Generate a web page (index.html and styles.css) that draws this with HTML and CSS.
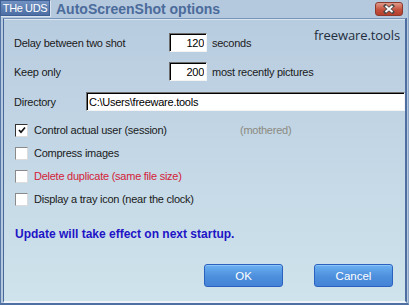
FILE: index.html
```html
<!DOCTYPE html>
<html lang="en">
<head>
    <meta charset="utf-8"/>
    <title>AutoScreenShot options</title>
    <link rel="stylesheet" href="styles.css">
</head>
<body>
    <div class="window">
        <div class="titlebar">
            <span class="badge">THe UDS</span>
            <span class="title">AutoScreenShot options</span>
            <span class="close">
                <svg width="14" height="10" viewBox="0 0 14 10">
                    <path d="M3.5 2 L10.5 8 M10.5 2 L3.5 8" stroke="#4a4a4a" stroke-width="3.6" stroke-linecap="square"/>
                    <path d="M3.5 2 L10.5 8 M10.5 2 L3.5 8" stroke="#ffffff" stroke-width="1.8"/>
                </svg>
            </span>
        </div>
        <div class="client">
            <div class="row">
                <label class="field-label" for="delay">Delay between two shot</label>
                <input class="num" id="delay" type="text" value="120">
                <span class="unit">seconds</span>
                <span class="brand">freeware.tools</span>
            </div>
            <div class="row second">
                <label class="field-label" for="keep">Keep only</label>
                <input class="num" id="keep" type="text" value="200">
                <span class="unit">most recently pictures</span>
            </div>
            <div class="row third">
                <label class="dir-label" for="dir">Directory</label>
                <input class="path" id="dir" type="text" value="C:\Users\freeware.tools">
            </div>

            <div class="checks">
                <div class="check">
                    <span class="box checked">
                        <svg width="8" height="8" viewBox="0 0 8 8"><path d="M1 4 L3 6.3 L7 1.5" fill="none" stroke="#111" stroke-width="1.7"/></svg>
                    </span>
                    <span class="check-label wide">Control actual user (session)</span>
                    <span class="hint">(mothered)</span>
                </div>
                <div class="check">
                    <span class="box"></span>
                    <span class="check-label">Compress images</span>
                </div>
                <div class="check">
                    <span class="box"></span>
                    <span class="check-label danger">Delete duplicate (same file size)</span>
                </div>
                <div class="check">
                    <span class="box"></span>
                    <span class="check-label">Display a tray icon (near the clock)</span>
                </div>
            </div>

            <div class="notice">Update will take effect on next startup.</div>

            <div class="actions">
                <button class="button">OK</button>
                <button class="button">Cancel</button>
            </div>
        </div>
    </div>
</body>
</html>
```
FILE: styles.css
```css
* {
    box-sizing: border-box;
}

body {
    margin: 0;
    font-family: "Liberation Sans", Arial, sans-serif;
    font-size: 11px;
    letter-spacing: -0.25px;
    color: #1a1a1a;
}

.window {
    width: 409px;
    height: 305px;
    display: flex;
    flex-direction: column;
    background: #b4c8de;
    border-left: 1px solid #5676a8;
    border-right: 1px solid #8fa8c8;
    border-bottom: 2px solid #4f70a3;
    padding: 0 1px 0 2px;
}

.titlebar {
    height: 18px;
    display: flex;
    align-items: flex-start;
    margin-left: -3px;
}

.badge {
    width: 50px;
    height: 16px;
    line-height: 14px;
    text-align: center;
    color: #fff;
    font-size: 11px;
    letter-spacing: -0.4px;
    background: linear-gradient(#7191c2, #4d6ea4);
    border: 1px solid #3e5f94;
    box-shadow: 1px 1px 0 #d9e4f0;
}

.title {
    margin-left: 6px;
    font-size: 14px;
    font-weight: bold;
    line-height: 18px;
    letter-spacing: 0;
    color: #4b6b9b;
}

.close {
    margin-left: auto;
    margin-right: 4px;
    margin-top: 2px;
    width: 28px;
    height: 14px;
    display: flex;
    align-items: center;
    justify-content: center;
    border: 1px solid #8c3a2e;
    border-radius: 3px;
    background: linear-gradient(#e09a88, #c4523e 55%, #b5402c);
}

.client {
    flex: 1;
    display: flex;
    flex-direction: column;
    padding: 14px 0 0 10px;
    border-top: 1px solid #7994bb;
    border-left: 1px solid #49689b;
    border-right: 2px solid #4e6ea2;
    border-bottom: 2px solid #eef4f9;
    box-shadow: inset 0 1px 0 #d8e4f0;
    background: linear-gradient(#b8cce0, #cfe3ec);
}

.row {
    height: 19px;
    display: flex;
    align-items: center;
}

.second {
    margin-top: 10px;
}

.third {
    margin-top: 11px;
}

.field-label {
    width: 155px;
}

.dir-label {
    width: 72px;
}

.num,
.path {
    height: 19px;
    font-family: inherit;
    font-size: 11px;
    letter-spacing: -0.25px;
    color: #000;
    background: #fff;
    border-top: 1px solid #6d6d6d;
    border-left: 1px solid #6d6d6d;
    border-right: 1px solid #f4f4f4;
    border-bottom: 1px solid #f4f4f4;
    box-shadow: inset 1px 1px 0 #000;
    outline: none;
}

.num {
    width: 38px;
    text-align: right;
    padding: 1px 2px 0 0;
}

.path {
    flex: 1;
    padding: 1px 0 0 2px;
}

.unit {
    margin-left: 5px;
}

.brand {
    align-self: flex-start;
    margin-left: auto;
    margin-right: 5px;
    margin-top: -5px;
    font-family: "Open Sans", sans-serif;
    font-size: 13px;
    line-height: 15px;
    letter-spacing: -0.1px;
    color: #1f2d3d;
}

.checks {
    margin-top: 12px;
    display: flex;
    flex-direction: column;
    gap: 9px;
}

.check {
    height: 14px;
    display: flex;
    align-items: center;
}

.box {
    width: 13px;
    height: 13px;
    margin-left: 1px;
    display: flex;
    align-items: center;
    justify-content: center;
    background: #fff;
    border-top: 1px solid #8a8a8a;
    border-left: 1px solid #8a8a8a;
    border-right: 1px solid #dcdcdc;
    border-bottom: 1px solid #dcdcdc;
}

.box.checked {
    border-top-color: #333;
    border-left-color: #333;
}

.check-label {
    margin-left: 6px;
}

.check-label.wide {
    width: 206px;
}

.danger {
    color: #d42238;
}

.hint {
    color: #8c8a80;
}

.notice {
    margin-top: 21px;
    margin-left: 1px;
    font-size: 12px;
    font-weight: bold;
    line-height: 14px;
    letter-spacing: 0;
    color: #1e14c6;
}

.actions {
    margin-top: 23px;
    display: flex;
    justify-content: flex-end;
    gap: 31px;
    padding-right: 12px;
}

.button {
    width: 79px;
    height: 23px;
    font-family: inherit;
    font-size: 11.5px;
    letter-spacing: 0;
    color: #fff;
    border: 1px solid #2b62c0;
    border-radius: 3px;
    background: linear-gradient(#6bb0f2, #4d8fdc 55%, #4482d6);
    box-shadow: inset 0 1px 0 #8cc4f6;
    cursor: pointer;
}
```
